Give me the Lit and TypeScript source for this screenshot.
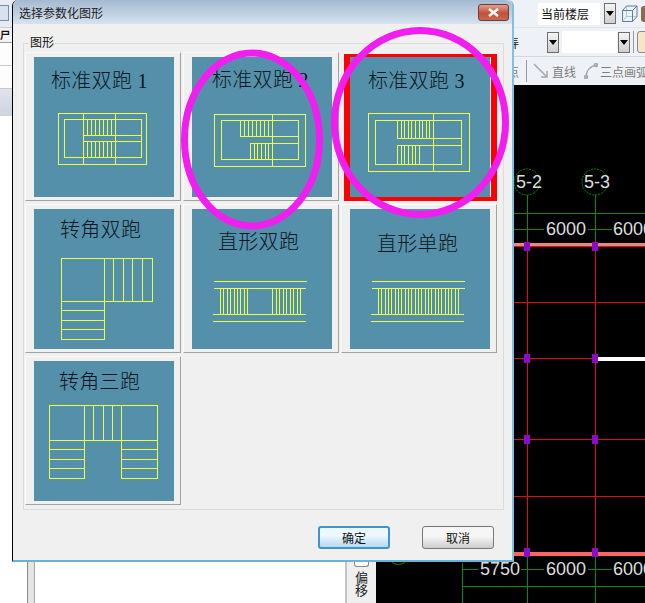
import { LitElement, html, css, svg } from "lit";
import { customElement } from "lit/decorators.js";

const vlines = (from: number, to: number, n: number, y0: number, y1: number) => {
  let d = "";
  for (let i = 0; i <= n; i++) {
    const x = Math.round(from + ((to - from) * i) / n) + 0.5;
    d += `M${x} ${y0}V${y1}`;
  }
  return d;
};
const rect = (x0: number, y0: number, x1: number, y1: number) => `M${x0} ${y0}H${x1}V${y1}H${x0}Z`;
const h = (y: number, x0: number, x1: number) => `M${x0} ${y}H${x1}`;
const v = (x: number, y0: number, y1: number) => `M${x} ${y0}V${y1}`;

interface Tile { title: string; x: number; y: number; d: string; sel?: boolean }

const tiles: Tile[] = [
  {
    title: "标准双跑 1", x: 17, y: 31,
    d: rect(24.5, 56.5, 112.5, 107.5) + rect(30.5, 62.5, 107.5, 100.5) + v(49.5, 56, 108) + v(81.5, 56, 108) +
      h(78.5, 49, 107) + h(84.5, 49, 107) + vlines(49, 81, 8, 62, 78) + vlines(49, 81, 8, 84, 100),
  },
  {
    title: "标准双跑 2", x: 20, y: 30,
    d: rect(22.5, 57.5, 113.5, 109.5) + rect(29.5, 63.5, 106.5, 102.5) + v(80.5, 57, 110) +
      h(79.5, 48, 106) + h(86.5, 58, 106) + vlines(48, 80, 8, 63, 79) + vlines(58, 80, 6, 87, 102),
  },
  {
    title: "标准双跑 3", x: 18, y: 31, sel: true,
    d: rect(18.5, 56.5, 119.5, 114.5) + rect(25.5, 63.5, 111.5, 107.5) + v(83.5, 57, 114) +
      h(81.5, 47, 111) + h(88.5, 47, 111) + vlines(47, 83, 10, 63, 81) + vlines(47, 69, 6, 89, 107),
  },
  {
    title: "转角双跑", x: 26, y: 28,
    d: rect(27.5, 49.5, 118.5, 92.5) + rect(27.5, 92.5, 70.5, 130.5) + v(70.5, 49, 93) +
      v(79.5, 49, 92) + v(89.5, 49, 92) + v(98.5, 49, 92) + v(108.5, 49, 92) +
      h(101.5, 28, 70) + h(111.5, 28, 70) + h(120.5, 28, 70),
  },
  {
    title: "直形双跑", x: 26, y: 40,
    d: h(72.5, 22, 115) + h(79.5, 22, 114) + h(105.5, 21, 114) + h(112.5, 21, 114) +
      vlines(28, 55, 8, 79, 105) + vlines(80, 108, 8, 79, 105),
  },
  {
    title: "直形单跑", x: 27, y: 42,
    d: h(72.5, 22, 115) + h(79.5, 22, 115) + h(105.5, 21, 114) + h(112.5, 21, 114) + vlines(28, 108, 24, 79, 105),
  },
  {
    title: "转角三跑", x: 25, y: 28,
    d: rect(15.5, 44.5, 123.5, 79.5) + rect(15.5, 79.5, 50.5, 117.5) + rect(87.5, 79.5, 123.5, 117.5) +
      v(59.5, 44, 79) + v(69.5, 44, 79) + v(78.5, 44, 79) + v(50.5, 44, 79) + v(87.5, 44, 79) +
      h(88.5, 16, 50) + h(98.5, 16, 50) + h(107.5, 16, 50) + h(88.5, 88, 123) + h(98.5, 88, 123) + h(107.5, 88, 123),
  },
];

const nodes: [number, number][] = [246, 358, 439, 552].flatMap((y) => [[527, y], [595, y]] as [number, number][]);

@customElement("app-root")
export class AppRoot extends LitElement {
  static styles = css`
    :host { display: block; position: relative; width: 645px; height: 603px; overflow: hidden;
      font: 12px "Noto Sans CJK SC", "Liberation Sans", sans-serif; color: #111; background: #fff; }
    .app { display: flex; width: 645px; height: 603px; }

    .side { width: 376px; flex: none; display: flex; flex-direction: column; }
    .side-top { height: 28px; background: #e6ecf3; border-bottom: 1px solid #c8ccd2; box-sizing: border-box; display: flex; align-items: center; }
    .side-icon { width: 8px; height: 14px; margin-top: -2px; border: 1px solid #7a8ea8; border-left: 0; background: #d6e2f0; }
    .side-head { height: 15px; font-size: 10px; line-height: 14px; font-weight: 700; background: #f3f3f3; border-bottom: 1px solid #9a9a9a; box-sizing: border-box; }
    .side-row { height: 23px; background: #fdfdfd; border-bottom: 1px solid #c9c9c9; box-sizing: border-box; }
    .side-sel { height: 27px; background: linear-gradient(#dfe4ec, #cdd4e0); }
    .side-low { flex: 1; display: flex; background: #fff; }
    .gap { width: 27px; flex: none; }
    .rail { width: 8px; flex: none; background: #e4e4e4; border-left: 1px solid #8a8a8a; border-right: 1px solid #a8a8a8; box-sizing: border-box; }
    .blank { flex: 1; }
    .panel { width: 31px; flex: none; background: #efefef; border-left: 2px solid #c4c4c4; box-sizing: border-box; display: flex; flex-direction: column; align-items: center; justify-content: flex-end; padding-bottom: 7px; }
    .panel-btn { width: 13px; height: 4px; border: 1px solid #888; border-top: 0; border-radius: 0 0 3px 3px; background: #fff; margin-bottom: 3px; }
    .panel-text { font-size: 13px; line-height: 13px; width: 13px; text-align: center; color: #222; }

    .work { flex: 1; min-width: 0; display: flex; flex-direction: column; }
    .bar { flex: none; display: flex; align-items: center; background: #eef1f5; overflow: hidden; white-space: nowrap; box-sizing: border-box; }
    .bar > * { flex: none; }
    .bar1 { height: 28px; padding-left: 162px; border-bottom: 1px solid #e2e5ea; }
    .bar2 { height: 29px; padding-left: 131px; border-bottom: 1px solid #d4d7dc; }
    .bar3 { height: 28px; padding-left: 131px; color: #7d7d7d; }
    .field { background: #fff; height: 22px; line-height: 21px; box-sizing: border-box; }
    .floor { width: 62px; padding-left: 3px; margin-right: 4px; }
    .drop { width: 12px; height: 21px; box-sizing: border-box; border: 1px solid #6d6d6d; background: linear-gradient(#f4f4f4, #cfcfcf); display: flex; align-items: center; justify-content: center; }
    .drop::after { content: ""; border: 4px solid transparent; border-top: 5px solid #000; border-bottom: 0; }
    .cube { margin-left: 6px; }
    .peek { width: 10px; height: 16px; margin-left: 3px; background: #8a6a4a; border-radius: 3px; }
    .frag { width: 12px; }
    .d1 { margin-left: 28px; }
    .lookup { width: 55px; margin: 0 1px 0 3px; }
    .sep { width: 1px; height: 22px; background: #9a9a9a; margin: 0 3px; }
    .mini { width: 12px; height: 20px; border: 1px solid #8a8a8a; border-radius: 3px; background: #f6e6c8; }
    .b3sep { margin: 0 6px 0 7px; }
    .tool-t { margin: 0 8px 0 3px; }
    .tool-t2 { margin-left: 2px; }
    .canvas { flex: 1; display: block; background: #000; width: 269px; }
    .cad-text { font: 18px "Liberation Sans", sans-serif; fill: #ddd; }

    .dialog { position: absolute; left: 12px; top: 0; width: 502px; height: 562px; box-sizing: border-box; display: flex; flex-direction: column;
      border: 1px solid #000; border-top: 0; border-right: 2px solid #7fc0e4; border-bottom: 2px solid #66b4da; border-radius: 6px 6px 0 0; background: #f0f0f0; }
    .titlebar { height: 24px; flex: none; display: flex; align-items: center; justify-content: space-between; padding: 0 3px 0 6px; border-radius: 6px 6px 0 0;
      background: linear-gradient(#a4b9d0, #d6e2ef); color: #222; }
    .close { width: 31px; height: 17px; box-sizing: border-box; border: 1px solid #6b3b35; border-radius: 3px; background: linear-gradient(#e0a090, #c2503a 55%, #c86a50); display: flex; align-items: center; justify-content: center; margin-top: 1px; }
    .body { flex: 1; display: flex; flex-direction: column; padding: 19px 8px 0 10px; }
    .group { position: relative; height: 467px; box-sizing: border-box; border: 1px solid #dcdcdc; padding: 8px 1px 0; }
    .legend { position: absolute; left: 5px; top: -9px; background: #f0f0f0; line-height: 14px; padding: 0 1px; }
    .grid { display: grid; grid-template-columns: repeat(3, 156px); grid-auto-rows: 149px; column-gap: 2px; row-gap: 3px; }
    .cell { box-sizing: border-box; padding: 4px 8px 5px; border: 1px solid; border-color: #fafafa #a2a2a2 #a2a2a2 #fafafa; }
    .cell.sel { border: solid #fe0000; border-width: 3px 6px 4px; margin: 2px 0 0 3px; padding: 0; }
    .tile { display: block; width: 140px; height: 140px; background: #5590aa; }
    .tile-title { font: 300 20px "Liberation Serif", "Noto Sans CJK SC", serif; fill: #0c1620; letter-spacing: .3px; }
    .tile-lines { fill: none; stroke: #ecff48; stroke-width: 1; shape-rendering: crispEdges; }
    .footer { flex: 1; display: flex; justify-content: flex-end; align-items: flex-start; gap: 32px; padding: 16px 10px 0 0; }
    .btn { width: 72px; height: 23px; box-sizing: border-box; border: 1px solid #777; border-radius: 3px; background: linear-gradient(#f6f6f6 45%, #cdcdcd); text-align: center; line-height: 21px; color: #111; }
    .btn.primary { border: 2px solid #3f94c8; line-height: 19px; background: linear-gradient(#eef7fd 40%, #b4d9f1); }

    .marks { position: absolute; left: 0; top: 0; width: 645px; height: 603px; pointer-events: none; }
    .mark { fill: none; stroke: #f01ff0; stroke-width: 7; }
  `;

  render() {
    return html`
      <div class="app">
        <div class="side">
          <div class="side-top"><div class="side-icon"></div></div>
          <div class="side-head">尸</div>
          <div class="side-row"></div>
          <div class="side-row"></div>
          <div class="side-sel"></div>
          <div class="side-low">
            <div class="gap"></div>
            <div class="rail"></div>
            <div class="blank"></div>
            <div class="panel">
              <div class="panel-btn"></div>
              <div class="panel-text">偏移</div>
            </div>
          </div>
        </div>
        <div class="work">
          <div class="bar bar1">
            <div class="field floor">当前楼层</div>
            <div class="drop"></div>
            <svg class="cube" width="16" height="18" viewBox="0 0 16 18" fill="#e8f3fa" stroke="#5a8298">
              <path d="M.5 5.5h10v11H.5zM.5 5.5l4-4.5h10.500l-4.500 4.500M10.500 16.500l4.500-5V1" />
              <path d="M.5 16.500l4-5H15M4.500 1v10.500" stroke-opacity=".4" fill="none" />
            </svg>
            <div class="peek"></div>
          </div>
          <div class="bar bar2">
            <div class="frag">弄</div>
            <div class="drop d1"></div>
            <div class="field lookup"></div>
            <div class="drop"></div>
            <div class="sep"></div>
            <div class="mini"></div>
          </div>
          <div class="bar bar3">
            <div class="frag">点</div>
            <div class="sep b3sep"></div>
            <svg width="16" height="16" viewBox="0 0 16 16" fill="none" stroke="#a8a8a8" stroke-width="1.500">
              <path d="M1 1l13 13M14 8v6H8" />
            </svg>
            <span class="tool-t">直线</span>
            <svg width="14" height="16" viewBox="0 0 14 16" fill="none" stroke="#a8a8a8" stroke-width="1.500">
              <path d="M2 15C2 8 6 3 13 2" /><circle cx="2" cy="14" r="1.500" /><circle cx="12" cy="2" r="1.500" />
            </svg>
            <span class="tool-t2">三点画弧</span>
          </div>
          ${this.canvas()}
        </div>
      </div>

      <div class="dialog">
        <div class="titlebar">
          <span>选择参数化图形</span>
          <div class="close">
            <svg width="13" height="9" viewBox="0 0 13 9" fill="none" stroke="#fff" stroke-width="2.400"><path d="M2 1l9 7M11 1l-9 7" /></svg>
          </div>
        </div>
        <div class="body">
          <div class="group">
            <span class="legend">图形</span>
            <div class="grid">
              ${tiles.map((t) => html`
                <div class="cell ${t.sel ? "sel" : ""}">
                  <svg class="tile" viewBox="0 0 140 140">
                    <text class="tile-title" x=${t.x} y=${t.y}>${t.title}</text>
                    <path class="tile-lines" d=${t.d} />
                  </svg>
                </div>`)}
            </div>
          </div>
          <div class="footer">
            <div class="btn primary">确定</div>
            <div class="btn">取消</div>
          </div>
        </div>
      </div>

      <svg class="marks" viewBox="0 0 645 603">
        <ellipse class="mark" cx="252" cy="139.500" rx="67.500" ry="86.500" />
        <ellipse class="mark" cx="420" cy="122.500" rx="85.500" ry="92" />
      </svg>
    `;
  }

  private canvas() {
    const green = "#0a8a0a";
    const red = "#e00c0c";
    return html`
      <svg class="canvas" viewBox="376 85 269 518">
        <g fill="none" stroke=${green} shape-rendering="crispEdges">
          <path d="M527.500 195V245M595.500 195V245M513 213.500H645M513 229.500H645" />
          <path d="M527.500 555V603M595.500 555V603M462.500 563V603M462 569.500H645M462 586.500H645" />
          <path d="M392 562.500q6 4 13 0" shape-rendering="auto" />
        </g>
        <g fill="none" stroke=${green}>
          <circle cx="527" cy="182" r="13" stroke-dasharray="2 1" />
          <circle cx="595" cy="182" r="13" stroke-dasharray="2 1" />
        </g>
        ${svg`
          <rect x="513" y="243" width="132" height="3" fill="#e88880" />
          <rect x="513" y="246" width="132" height="1" fill=${red} />
          <rect x="513" y="302" width="132" height="1" fill=${red} />
          <rect x="513" y="358" width="132" height="1" fill=${red} />
          <rect x="597" y="357" width="48" height="4" fill="#fff" />
          <rect x="513" y="439" width="132" height="1" fill=${red} />
          <rect x="513" y="496" width="132" height="1" fill=${red} />
          <rect x="513" y="552" width="132" height="4" fill="#ff6464" />
          <rect x="527" y="240" width="1" height="316" fill=${red} />
          <rect x="595" y="240" width="1" height="316" fill=${red} />
        `}
        ${nodes.map(([x, y]) => svg`<rect x=${x - 3} y=${y - 4} width="6" height="9" fill="#8a0cc8" />`)}
        <text class="cad-text" x="516" y="188">5-2</text>
        <text class="cad-text" x="584" y="188">5-3</text>
        <rect x="544" y="220" width="44" height="18" fill="#000" />
        <rect x="612" y="220" width="33" height="18" fill="#000" />
        <text class="cad-text" x="546" y="235">6000</text>
        <text class="cad-text" x="613" y="235">6000</text>
        <rect x="478" y="561" width="43" height="17" fill="#000" />
        <rect x="544" y="561" width="44" height="17" fill="#000" />
        <rect x="612" y="561" width="33" height="17" fill="#000" />
        <text class="cad-text" x="480" y="575">5750</text>
        <text class="cad-text" x="546" y="575">6000</text>
        <text class="cad-text" x="613" y="575">6000</text>
      </svg>
    `;
  }
}
